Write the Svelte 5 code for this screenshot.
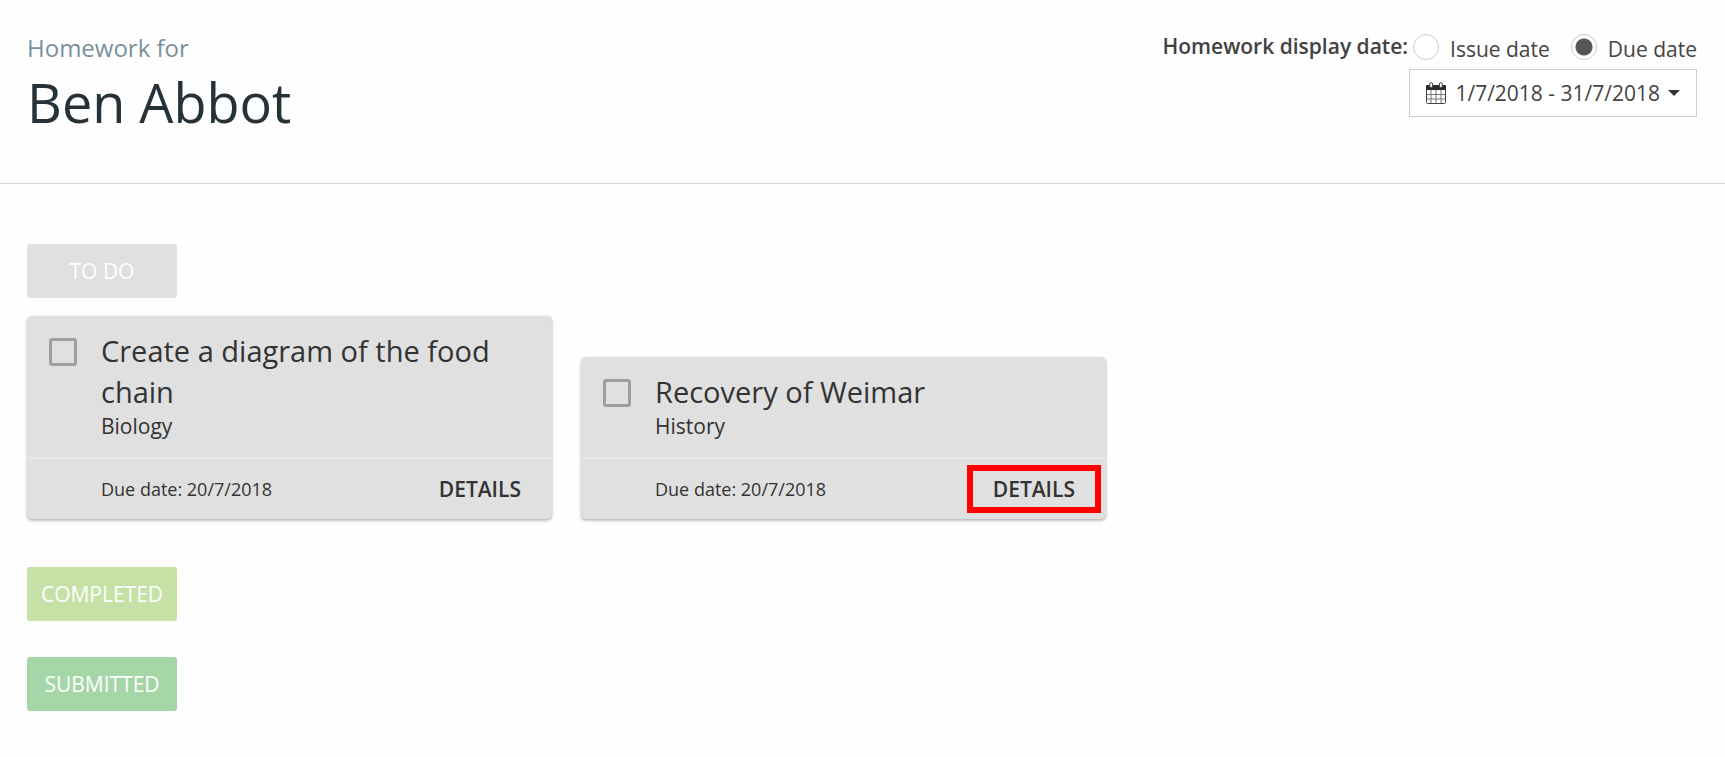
<script lang="ts">
	type Homework = {
		id: number;
		title: string;
		subject: string;
		due: string;
		done: boolean;
		highlighted: boolean;
	};

	let displayDate = 'due';
	const range = '1/7/2018 - 31/7/2018';

	let todo: Homework[] = [
		{
			id: 1,
			title: 'Create a diagram of the food chain',
			subject: 'Biology',
			due: '20/7/2018',
			done: false,
			highlighted: false
		},
		{
			id: 2,
			title: 'Recovery of Weimar',
			subject: 'History',
			due: '20/7/2018',
			done: false,
			highlighted: true
		}
	];
</script>

<header class="header">
	<div>
		<p class="header__intro">Homework for</p>
		<h1 class="header__name">Ben Abbot</h1>
	</div>

	<div class="filters">
		<div class="filters__row" role="radiogroup" aria-labelledby="display-date">
			<span id="display-date" class="filters__title">Homework display date:</span>
			<div class="filters__options">
				<label class="option">
					<input type="radio" name="display-date" value="issue" bind:group={displayDate} />
					<span>Issue date</span>
				</label>
				<label class="option">
					<input type="radio" name="display-date" value="due" bind:group={displayDate} />
					<span>Due date</span>
				</label>
			</div>
		</div>

		<button type="button" class="picker">
			<svg class="picker__calendar" viewBox="0 0 20 22" aria-hidden="true">
				<rect x="0.5" y="3.500" width="19" height="18" rx="1" fill="#fff" stroke="#444" />
				<path d="M5 8v13M10 8v13M15 8v13M1 12.500h18M1 17h18" stroke="#666" stroke-width="0.9" />
				<path d="M0 8V4q0-1 1-1h18q1 0 1 1v4z" fill="#2b2b2b" />
				<rect x="3.800" y="0.6" width="2.800" height="5" rx="1.400" fill="#fff" stroke="#444" />
				<rect x="13.400" y="0.6" width="2.800" height="5" rx="1.400" fill="#fff" stroke="#444" />
			</svg>
			<span>{range}</span>
			<svg class="picker__caret" viewBox="0 0 12 6" aria-hidden="true">
				<path d="M0 0h12L6 6z" />
			</svg>
		</button>
	</div>
</header>

<main class="board">
	<section>
		<h2 class="chip">To do</h2>
		<div class="cards">
			{#each todo as item (item.id)}
				<article class="card">
					<div class="card__body">
						<input
							id="homework-{item.id}"
							class="card__check"
							type="checkbox"
							bind:checked={item.done}
						/>
						<div>
							<label class="card__title" for="homework-{item.id}">{item.title}</label>
							<p class="card__subject">{item.subject}</p>
						</div>
					</div>
					<div class="card__footer">
						<span class="card__due">Due date: {item.due}</span>
						<button type="button" class="details" class:details--highlighted={item.highlighted}>
							Details
						</button>
					</div>
				</article>
			{/each}
		</div>
	</section>

	<h2 class="chip chip--completed">Completed</h2>
	<h2 class="chip chip--submitted">Submitted</h2>
</main>

<style>
	:global(body) {
		background-color: #fefefe;
		color: #333;
		font-family: 'Open Sans', 'Liberation Sans', sans-serif;
		font-size: 21px;
	}

	h1,
	h2,
	p {
		margin: 0;
		font-weight: 400;
	}

	button,
	input {
		margin: 0;
		font: inherit;
		color: inherit;
	}

	button {
		cursor: pointer;
	}

	.header {
		display: flex;
		flex-wrap: wrap;
		justify-content: space-between;
		padding: 32px 28px 43px 27px;
		border-bottom: 1px solid #cfd8dc;
	}

	.header__intro {
		font-size: 24px;
		line-height: 32px;
		color: #78909c;
	}

	.header__name {
		font-size: 54px;
		line-height: 76px;
		color: #263238;
	}

	.filters {
		display: flex;
		flex-direction: column;
		align-items: flex-end;
		gap: 5px;
	}

	.filters__row {
		display: flex;
		align-items: flex-start;
		gap: 5px;
	}

	.filters__title {
		line-height: 28px;
		font-weight: 600;
		color: #424242;
	}

	.filters__options {
		display: flex;
		gap: 21px;
		padding-top: 2px;
	}

	.option {
		display: flex;
		align-items: flex-start;
		gap: 11px;
		line-height: 30px;
		color: #444;
		cursor: pointer;
	}

	.option input {
		appearance: none;
		box-sizing: border-box;
		width: 26px;
		height: 26px;
		border: 1px solid #ccc;
		border-radius: 50%;
		background-color: #fff;
	}

	.option input:checked {
		background-image: radial-gradient(circle, #555 8px, transparent 9px);
	}

	.picker {
		display: flex;
		align-items: center;
		box-sizing: border-box;
		height: 48px;
		padding: 0 16px;
		border: 1px solid #ccc;
		background-color: #fff;
		color: #444;
	}

	.picker__calendar {
		width: 20px;
		height: 22px;
		margin-right: 9px;
		fill: none;
	}

	.picker__caret {
		width: 12px;
		height: 6px;
		margin-left: 8px;
		fill: #333;
	}

	.board {
		padding: 60px 27px 46px;
	}

	.chip {
		width: 150px;
		margin-bottom: 36px;
		border-radius: 3px;
		background-color: #e0e0e0;
		font-size: 21px;
		line-height: 54px;
		text-align: center;
		text-transform: uppercase;
		color: #fff;
	}

	.chip--completed {
		background-color: #c5e1a5;
	}

	.chip--submitted {
		background-color: #a5d6a7;
	}

	section .chip {
		margin-bottom: 18px;
	}

	.cards {
		display: flex;
		flex-wrap: wrap;
		align-items: flex-end;
		gap: 29px;
		margin-bottom: 48px;
	}

	.card {
		width: 525px;
		max-width: 100%;
		border-radius: 5px;
		background-color: #e0e0e0;
		box-shadow:
			0 2px 3px rgba(0, 0, 0, 0.24),
			0 0 2px rgba(0, 0, 0, 0.12);
		color: #333;
	}

	.card__body {
		display: flex;
		align-items: flex-start;
		gap: 24px;
		padding: 14px 24px 16px 22px;
	}

	.card__check {
		appearance: none;
		flex: none;
		box-sizing: border-box;
		width: 28px;
		height: 28px;
		margin-top: 8px;
		border: 3px solid #9e9e9e;
		border-radius: 3px;
	}

	.card__check:checked {
		background-color: #9e9e9e;
	}

	.card__title {
		display: block;
		font-size: 29px;
		line-height: 41px;
	}

	.card__subject {
		line-height: 29px;
	}

	.card__footer {
		display: flex;
		align-items: center;
		justify-content: space-between;
		padding: 6px 5px 6px 74px;
		border-top: 2px solid #e8e8e8;
	}

	.card__due {
		font-size: 18px;
	}

	.details {
		height: 48px;
		padding: 0 20px;
		border: 6px solid transparent;
		background: none;
		font-weight: 600;
		line-height: 28px;
		text-transform: uppercase;
	}

	.details--highlighted {
		border-color: #f00;
	}
</style>
